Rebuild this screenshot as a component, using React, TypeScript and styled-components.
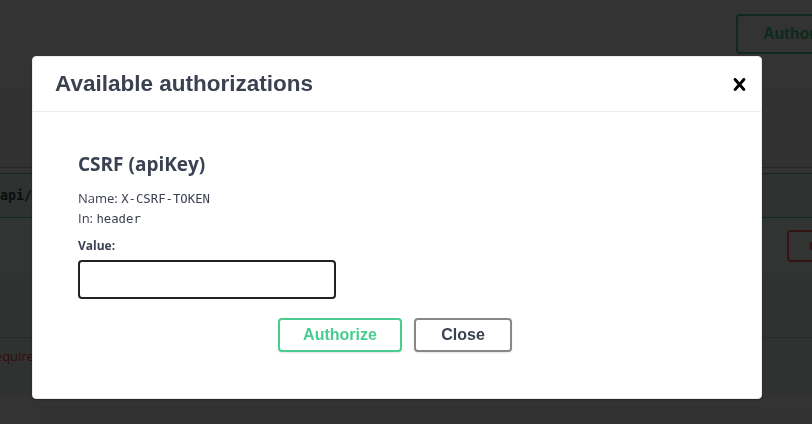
import React from 'react';
import styled, { createGlobalStyle } from 'styled-components';

const GlobalStyle = createGlobalStyle`
    html, body {
        margin: 0;
        padding: 0;
        background: #fff;
        overflow: hidden;
    }
    * {
        box-sizing: border-box;
    }
`;

const CloseIcon = () => (
    <svg width="25" height="25" viewBox="0 0 20 20" aria-hidden="true">
        <path
            fill="#000"
            d="M14.348 14.849c-.469.469-1.229.469-1.697 0L10 11.819l-2.651 3.029c-.469.469-1.229.469-1.697 0-.469-.469-.469-1.229 0-1.697l2.758-3.15-2.759-3.152c-.469-.469-.469-1.228 0-1.697.469-.469 1.228-.469 1.697 0L10 8.183l2.651-3.031c.469-.469 1.228-.469 1.697 0 .469.469.469 1.229 0 1.697l-2.758 3.152 2.758 3.15c.469.469.469 1.229 0 1.698z"
        />
    </svg>
);

const App = () => {
    return (
        <>
            <GlobalStyle />
            <Page>
                <SchemeBar>
                    <PageAuthorize>Authorize</PageAuthorize>
                </SchemeBar>
                <TagHeader />
                <Opblock>
                    <Summary>
                        <Path>api/v1/session</Path>
                    </Summary>
                    <SectionHeader>
                        <CancelButton>Cancel</CancelButton>
                    </SectionHeader>
                    <TableHead />
                    <ParamRow>
                        <Required>* required</Required>
                    </ParamRow>
                </Opblock>
                <Responses />
            </Page>

            <Backdrop>
                <Modal>
                    <ModalHeader>
                        <Title>Available authorizations</Title>
                        <CloseButton>
                            <CloseIcon />
                        </CloseButton>
                    </ModalHeader>
                    <ModalBody>
                        <SchemeName>CSRF (apiKey)</SchemeName>
                        <Info>
                            Name: <Code>X-CSRF-TOKEN</Code>
                        </Info>
                        <Info>
                            In: <Code>header</Code>
                        </Info>
                        <Label>Value:</Label>
                        <ValueInput type="text" />
                        <Actions>
                            <Button variant="authorize">Authorize</Button>
                            <Button variant="close">Close</Button>
                        </Actions>
                    </ModalBody>
                </Modal>
            </Backdrop>
        </>
    );
};

/* page under the dialog */

const Page = styled.div`
    width: 812px;
    height: 424px;
    overflow: hidden;
    background: #fff;
    font-family: "Liberation Sans", Arial, sans-serif;
`;

const SchemeBar = styled.div`
    height: 88px;
    display: flex;
    padding: 14px 0 0 736px;
    overflow: hidden;
    background: #fff;
`;

const PageAuthorize = styled.div`
    flex-shrink: 0;
    height: 40px;
    padding: 0 25px;
    display: flex;
    align-items: center;
    border: 2px solid #49cc90;
    border-radius: 4px;
    color: #49cc90;
    font-weight: 700;
    font-size: 16px;
    white-space: nowrap;
`;

const TagHeader = styled.div`
    height: 80px;
    background: #f6f6f6;
    border-bottom: 1px solid rgba(59, 65, 81, 0.3);
`;

const Opblock = styled.div`
    margin-top: 5px;
    background: rgba(73, 204, 144, 0.1);
    border-top: 1px solid #49cc90;
`;

const Summary = styled.div`
    height: 43px;
    display: flex;
    align-items: center;
    overflow: hidden;
`;

const Path = styled.span`
    font-family: "DejaVu Sans Mono", monospace;
    font-weight: 700;
    font-size: 13.3px;
    color: #3b4151;
    white-space: nowrap;
`;

const SectionHeader = styled.div`
    height: 56px;
    display: flex;
    align-items: center;
    padding-left: 787px;
    border-top: 1px solid #49cc90;
    background: rgba(255, 255, 255, 0.8);
    overflow: hidden;
`;

const CancelButton = styled.div`
    flex-shrink: 0;
    height: 32px;
    padding: 0 20px;
    display: flex;
    align-items: center;
    border: 2px solid #ff6060;
    border-radius: 4px;
    color: #ff6060;
    font-weight: 700;
    font-size: 14px;
`;

const TableHead = styled.div`
    height: 65px;
    border-bottom: 1px solid rgba(59, 65, 81, 0.2);
`;

const ParamRow = styled.div`
    height: 59px;
    padding-top: 9px;
`;

const Required = styled.div`
    text-indent: -21px;
    color: #f93e3e;
    font-family: "Open Sans", sans-serif;
    font-size: 13px;
    white-space: nowrap;
`;

const Responses = styled.div`
    margin: 10px 0 0 40px;
    height: 40px;
    background: #fafafa;
`;

/* dialog */

const Backdrop = styled.div`
    position: fixed;
    inset: 0;
    background: rgba(0, 0, 0, 0.8);
    display: flex;
    justify-content: center;
    align-items: flex-start;
    padding: 56px 18px 0 0;
`;

const Modal = styled.div`
    width: 730px;
    background: #fff;
    border: 1px solid #ebebeb;
    border-radius: 4px;
    box-shadow: 0 1px 2px rgba(0, 0, 0, 0.3);
`;

const ModalHeader = styled.div`
    height: 55px;
    display: flex;
    align-items: center;
    justify-content: space-between;
    padding: 0 9px 0 22px;
    border-bottom: 1px solid #ebebeb;
`;

const Title = styled.h3`
    margin: 0;
    font-family: "Liberation Sans", Arial, sans-serif;
    font-weight: 700;
    font-size: 22.5px;
    color: #3b4151;
`;

const CloseButton = styled.button`
    border: none;
    background: none;
    padding: 0;
    display: flex;
    cursor: pointer;
`;

const ModalBody = styled.div`
    padding: 40px 45px 46px;
    font-family: "Open Sans", sans-serif;
    color: #3b4151;
`;

const SchemeName = styled.h4`
    margin: 0 0 13px;
    font-size: 19px;
    line-height: 24px;
    font-weight: 700;
`;

const Info = styled.div`
    font-size: 13px;
    line-height: 19px;
`;

const Code = styled.code`
    font-family: "DejaVu Sans Mono", monospace;
    font-size: 12.3px;
`;

const Label = styled.div`
    margin-top: 9px;
    font-size: 12px;
    line-height: 16px;
    font-weight: 700;
`;

const ValueInput = styled.input`
    display: block;
    margin-top: 6px;
    width: 258px;
    height: 39px;
    border: 2px solid #222;
    border-radius: 4px;
    background: #fff;
    outline: none;
`;

const Actions = styled.div`
    margin-top: 19px;
    display: flex;
    justify-content: center;
    gap: 12px;
    padding-right: 4px;
`;

const Button = styled.button<{ variant: 'authorize' | 'close' }>`
    height: 34px;
    width: ${p => (p.variant === 'authorize' ? '124px' : '98px')};
    border-radius: 4px;
    background: #fff;
    border: 2px solid ${p => (p.variant === 'authorize' ? '#49cc90' : '#888')};
    color: ${p => (p.variant === 'authorize' ? '#49cc90' : '#3b4151')};
    font-family: "Liberation Sans", Arial, sans-serif;
    font-weight: 700;
    font-size: 16px;
    box-shadow: 0 1px 2px rgba(0, 0, 0, 0.1);
    cursor: pointer;
`;

export default App;
